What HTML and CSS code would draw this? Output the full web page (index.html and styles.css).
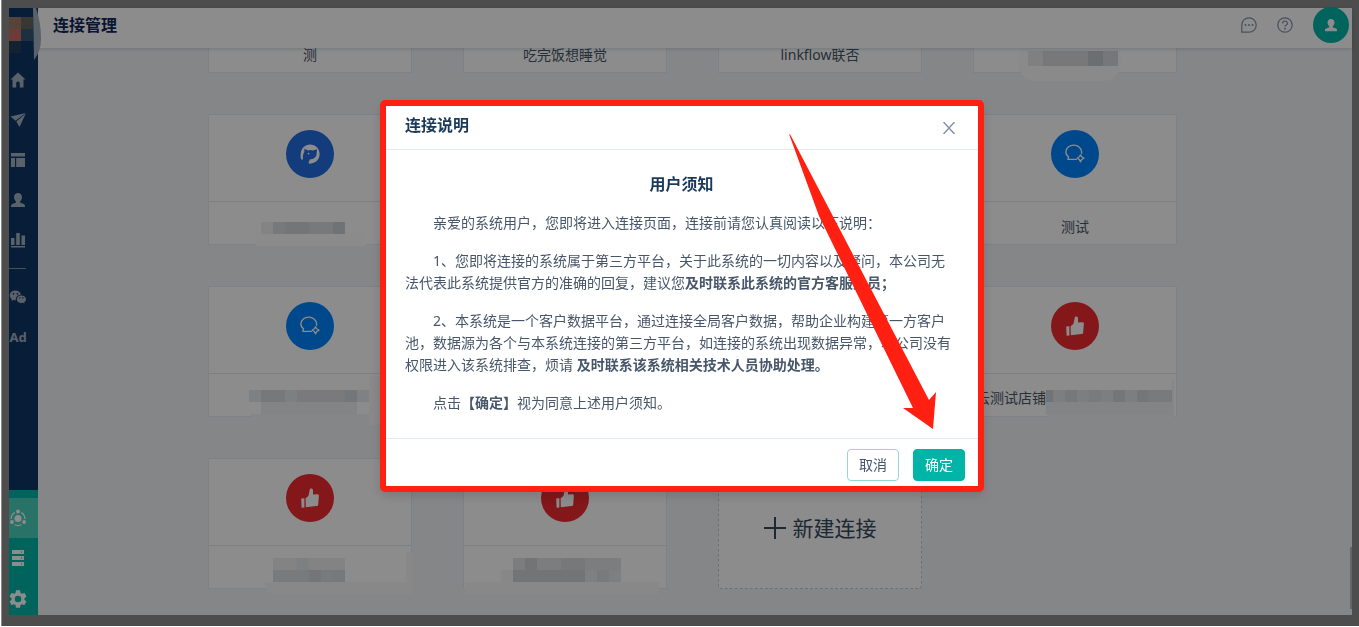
FILE: index.html
```
<!DOCTYPE html>
<html lang="zh-CN">
<head>
    <meta charset="UTF-8">
    <meta name="viewport" content="width=device-width, initial-scale=1.0">
    <title>连接管理</title>
    <link rel="stylesheet" href="styles.css">
</head>
<body>
    <!-- Shared icon shapes -->
    <svg class="sprite" aria-hidden="true">
        <symbol id="icon-chat" viewBox="0 0 20 20">
            <g fill="none" stroke="currentColor" stroke-width="1.3" stroke-linejoin="round" stroke-linecap="round">
                <path d="M11.500 15.300H2.800L3.600 13Q.8 11 .9 7.800C1 4 4.500 1.200 8.800 1.200S16.600 4.200 16.600 7.800V9.300"/>
                <path d="M15.500 10.800Q16.300 13.400 19 14.200Q16.300 15 15.500 17.800Q14.700 15 12.200 14.200Q14.700 13.400 15.500 10.800Z"/>
            </g>
        </symbol>
        <symbol id="icon-thumb" viewBox="0 0 20 20">
            <path fill="currentColor" d="M1.2 10.6L4.4 10.2V19.4L1.6 19.8ZM5.6 10.2L8.4 8L9.8 1.4C10 .2 13 0 13 2.6V6.6L17.6 6.2C18.8 6.2 19 7.2 18.8 8.4L18.2 16.4C18 17.8 17.4 18 16.4 18.1L5.8 19.3Z"/>
        </symbol>
        <symbol id="icon-user" viewBox="0 0 16 16">
            <path fill="currentColor" d="M8 1C10.5 1 12 2.8 12 5.2C12 7 11 8.8 10 9.4V10.6L13.6 12C14.6 12.4 15 13 15 15H1C1 13 1.4 12.4 2.4 12L6 10.6V9.4C5 8.8 4 7 4 5.2C4 2.8 5.500 1 8 1Z"/>
        </symbol>
    </svg>

    <div class="app">
        <nav class="sidebar">
            <div class="logo">
                <svg width="34" height="54" viewBox="0 0 34 54" aria-hidden="true">
                    <path fill="#a3b1bf" d="M24 0H27Q32 14 32 31Q32 43 25 52Z"/>
                    <rect y="9" width="12" height="12" fill="#9e7c68"/>
                    <rect x="12" y="9" width="12" height="12" fill="#696561"/>
                    <rect y="21" width="12" height="12" fill="#c96c68"/>
                    <rect x="12" y="21" width="12" height="12" fill="#345876"/>
                    <rect y="33" width="12" height="12" fill="#243e59"/>
                </svg>
            </div>
            <a class="nav-item" href="#" aria-label="首页">
                <svg width="16" height="16" viewBox="0 0 16 16"><path fill="currentColor" d="M8 .5L15.500 7.500H13.500V15.500H9.800V11Q9.800 9.500 8 9.500T6.200 11V15.500H2.500V7.500H.5Z"/></svg>
            </a>
            <a class="nav-item" href="#" aria-label="营销">
                <svg width="16" height="16" viewBox="0 0 16 16"><path fill="currentColor" d="M.5 4.500L15.700 1L5.500 8.800ZM15.800 1.500L9.500 15L6.300 9.500Z"/></svg>
            </a>
            <a class="nav-item" href="#" aria-label="内容">
                <svg width="16" height="16" viewBox="0 0 16 16"><path fill="currentColor" d="M1 1H15V4.500H1ZM1 6H5V15H1ZM6.200 6H15V15H6.200Z"/></svg>
            </a>
            <a class="nav-item" href="#" aria-label="用户">
                <svg width="16" height="16"><use href="#icon-user"/></svg>
            </a>
            <a class="nav-item" href="#" aria-label="报表">
                <svg width="16" height="16" viewBox="0 0 16 16"><path fill="currentColor" d="M1 6H4.500V13H1ZM6.200 1H9.800V13H6.200ZM11.500 3.500H15V13H11.500ZM1 14H15V15.500H1Z"/></svg>
            </a>
            <hr class="nav-line">
            <a class="nav-item" href="#" aria-label="微信">
                <svg width="18" height="16" viewBox="0 0 18 16">
                    <path fill="currentColor" fill-rule="evenodd" d="M6.500 1.500C3 1.500.8 3.700.8 6.200C.8 8 1.700 9.300 2.900 10.200L2.500 12L4.600 10.900L6.900 11.200C6.300 8 9 5.800 12 5.800C11.400 3.200 9.200 1.500 6.500 1.500ZM4.600 4A.8.8 0 1 1 4.500 4ZM8.500 4A.8.8 0 1 1 8.400 4Z"/>
                    <path fill="currentColor" fill-rule="evenodd" d="M12.300 6.500C9.800 6.500 7.800 8.100 7.800 10.200S9.800 14 12.300 14L14 13.700L15.600 14.500L15.200 13.100C16.400 12.400 17 11.400 17 10.200C17 8.100 14.900 6.500 12.300 6.500ZM10.900 8.300A.7.7 0 1 1 10.800 8.300ZM13.900 8.300A.7.7 0 1 1 13.800 8.300Z"/>
                </svg>
            </a>
            <a class="nav-item nav-text" href="#">Ad</a>

            <div class="nav-bottom">
                <a class="nav-item active" href="#" aria-label="连接管理">
                    <svg width="18" height="18" viewBox="0 0 18 18">
                        <g fill="currentColor"><circle cx="9" cy="9.500" r="3.500"/><circle cx="9" cy="2.500" r="1.900"/><circle cx="2.900" cy="13" r="1.900"/><circle cx="15.100" cy="13" r="1.900"/></g>
                        <path fill="none" stroke="currentColor" stroke-width="1.200" d="M2 10Q2.200 5.500 5.800 3.600M12.200 3.600Q15.800 5.500 16 10M5.500 15.800Q9 17.300 12.500 15.800"/>
                    </svg>
                </a>
                <a class="nav-item" href="#" aria-label="数据">
                    <svg width="16" height="16" viewBox="0 0 16 16"><path fill="currentColor" fill-rule="evenodd" d="M2 0H14V4H2ZM2 6H14V10H2ZM2 12H14V16H2ZM11 1.500V2.500H12V1.500ZM11 7.500V8.500H12V7.500ZM11 13.500V14.500H12V13.500Z"/></svg>
                </a>
                <a class="nav-item" href="#" aria-label="设置">
                    <svg width="18" height="18" viewBox="2 2 20 20"><path fill="currentColor" d="M19.140 12.940c.04-.3.060-.61.060-.94s-.02-.64-.07-.94l2.030-1.580a.49.49 0 0 0 .12-.61l-1.920-3.320a.49.49 0 0 0-.59-.22l-2.390.96a7 7 0 0 0-1.620-.94l-.36-2.540a.48.48 0 0 0-.48-.41h-3.840a.48.48 0 0 0-.47.41l-.36 2.540c-.59.24-1.130.57-1.620.94l-2.390-.96a.48.48 0 0 0-.59.22L2.740 8.870a.48.48 0 0 0 .12.61l2.030 1.580c-.05.3-.09.63-.09.94s.02.64.07.94l-2.030 1.580a.49.49 0 0 0-.12.61l1.920 3.320c.12.22.37.29.59.22l2.390-.96c.5.38 1.030.7 1.620.94l.36 2.540c.05.24.24.41.48.41h3.840c.24 0 .44-.17.47-.41l.36-2.540c.59-.24 1.130-.56 1.620-.94l2.390.96c.22.08.47 0 .59-.22l1.920-3.320a.48.48 0 0 0-.12-.61zM12 15.600a3.600 3.600 0 1 1 0-7.200 3.600 3.600 0 0 1 0 7.200z"/></svg>
                </a>
            </div>
        </nav>

        <div class="page">
            <header class="topbar">
                <h1>连接管理</h1>
                <button class="icon-btn" type="button" aria-label="消息">
                    <svg width="16" height="16" viewBox="0 0 16 16"><path fill="none" stroke="currentColor" stroke-width="1.200" d="M.8 15.200V8A7.200 7.200 0 1 1 8 15.200Z"/><g fill="currentColor"><circle cx="4.500" cy="8" r="1"/><circle cx="8" cy="8" r="1"/><circle cx="11.500" cy="8" r="1"/></g></svg>
                </button>
                <button class="icon-btn" type="button" aria-label="帮助">
                    <svg width="16" height="16" viewBox="0 0 16 16"><g fill="none" stroke="currentColor" stroke-width="1.200"><circle cx="8" cy="8" r="7.200"/><path d="M5.600 6.400A2.400 2.200 0 1 1 8.800 8.300Q8 8.700 8 9.800"/></g><circle cx="8" cy="11.700" r=".9" fill="currentColor"/></svg>
                </button>
                <button class="avatar" type="button" aria-label="账户">
                    <svg width="14" height="14"><use href="#icon-user"/></svg>
                </button>
            </header>

            <main class="content">
                <div class="card-grid">
                    <div class="card">
                        <div class="card-body"><span class="badge blue"><svg width="20" height="20"><use href="#icon-chat"/></svg></span></div>
                        <div class="card-name">测</div>
                    </div>
                    <div class="card">
                        <div class="card-body"><span class="badge blue"><svg width="20" height="20"><use href="#icon-chat"/></svg></span></div>
                        <div class="card-name">吃完饭想睡觉</div>
                    </div>
                    <div class="card">
                        <div class="card-body"><span class="badge blue"><svg width="20" height="20"><use href="#icon-chat"/></svg></span></div>
                        <div class="card-name">linkflow联否</div>
                    </div>
                    <div class="card">
                        <div class="card-body"><span class="badge blue"><svg width="20" height="20"><use href="#icon-chat"/></svg></span></div>
                        <div class="card-name masked">
                            <svg width="204" height="56" viewBox="0 0 204 56">
                                <rect x="45" y="11" width="103" height="40" rx="18" fill="#fbfbfb"/>
                                <rect x="55" y="21" width="15" height="15" fill="#e9eaec"/>
                                <rect x="70" y="21" width="45" height="15" fill="#dadbde"/>
                                <rect x="115" y="21" width="15" height="15" fill="#c5cad0"/>
                                <rect x="130" y="21" width="15" height="15" fill="#d6dbe1"/>
                            </svg>
                        </div>
                    </div>

                    <div class="card">
                        <div class="card-body">
                            <span class="badge navy">
                                <svg width="20" height="20" viewBox="0 0 20 20"><path fill="currentColor" d="M1.200 15.500C.5 13.500 .3 11.500 .8 9C1.400 4.500 5 .8 10 .6C15.500 .6 19.600 4.600 19.600 10C19.600 15.400 16 19.400 9 19.800L8.600 17.600C9.600 17.400 9.400 16.300 9.800 15.500C13.500 15.300 16.600 13 16.600 9.500L17 5.200L13 6.500Q10 5.600 8 6.600L4.500 4.800L4.300 8C2.800 10 2.800 13 3 15.500Z"/><circle cx="8.500" cy="9.600" r=".9" fill="currentColor"/></svg>
                            </span>
                        </div>
                        <div class="card-name masked">
                            <svg width="204" height="56" viewBox="0 0 204 56">
                                <rect x="48" y="30" width="110" height="14" fill="#fdfdfd"/>
                                <rect x="53" y="20" width="12" height="12" fill="#f0f0f2"/>
                                <rect x="65" y="20" width="12" height="12" fill="#d9dcde"/>
                                <rect x="77" y="20" width="24" height="12" fill="#d3d5d8"/>
                                <rect x="101" y="20" width="24" height="12" fill="#dadcdf"/>
                                <rect x="125" y="20" width="12" height="12" fill="#cdd0d5"/>
                            </svg>
                        </div>
                    </div>
                    <div class="card">
                        <div class="card-body"><span class="badge blue"><svg width="20" height="20"><use href="#icon-chat"/></svg></span></div>
                        <div class="card-name"></div>
                    </div>
                    <div class="card">
                        <div class="card-body"><span class="badge blue"><svg width="20" height="20"><use href="#icon-chat"/></svg></span></div>
                        <div class="card-name"></div>
                    </div>
                    <div class="card">
                        <div class="card-body"><span class="badge blue"><svg width="20" height="20"><use href="#icon-chat"/></svg></span></div>
                        <div class="card-name">测试</div>
                    </div>

                    <div class="card">
                        <div class="card-body"><span class="badge blue"><svg width="20" height="20"><use href="#icon-chat"/></svg></span></div>
                        <div class="card-name masked">
                            <svg width="204" height="56" viewBox="0 0 204 56">
                                <path fill="#f3f4f6" d="M42 40H204V51H60Q48 51 42 40Z"/>
                                <rect x="161" y="2" width="14" height="49" fill="#fafafa"/>
                                <rect x="53" y="28" width="96" height="13" fill="#eff0f2"/>
                                <rect x="41" y="16" width="12" height="12" fill="#e8e9eb"/>
                                <rect x="53" y="16" width="24" height="12" fill="#d9dbde"/>
                                <rect x="77" y="16" width="12" height="12" fill="#e6e7e9"/>
                                <rect x="89" y="16" width="48" height="12" fill="#dedfe2"/>
                                <rect x="137" y="16" width="12" height="12" fill="#d5d8dc"/>
                                <rect x="149" y="16" width="12" height="12" fill="#eaebed"/>
                            </svg>
                        </div>
                    </div>
                    <div class="card">
                        <div class="card-body"><span class="badge red"><svg width="20" height="20"><use href="#icon-thumb"/></svg></span></div>
                        <div class="card-name"></div>
                    </div>
                    <div class="card">
                        <div class="card-body"><span class="badge red"><svg width="20" height="20"><use href="#icon-thumb"/></svg></span></div>
                        <div class="card-name"></div>
                    </div>
                    <div class="card">
                        <div class="card-body"><span class="badge red"><svg width="20" height="20"><use href="#icon-thumb"/></svg></span></div>
                        <div class="card-name shop">
                            <span>云测试店铺</span>
                            <svg width="128" height="52" viewBox="0 0 128 52">
                                <path fill="#f3f4f6" d="M0 38H126V6H134V52H22Q4 48 0 38Z"/>
                                <rect y="28" width="126" height="13" fill="#eff0f2"/>
                                <rect y="16" width="126" height="12" fill="#e4e6e8"/>
                                <rect y="16" width="7" height="12" fill="#ced2d7"/>
                                <rect x="19" y="16" width="12" height="12" fill="#d8dadd"/>
                                <rect x="43" y="16" width="12" height="12" fill="#dcdee1"/>
                                <rect x="67" y="16" width="12" height="12" fill="#d4d7da"/>
                                <rect x="91" y="16" width="12" height="12" fill="#d6d8db"/>
                                <rect x="103" y="16" width="23" height="12" fill="#dcdee1"/>
                            </svg>
                        </div>
                    </div>

                    <div class="card">
                        <div class="card-body"><span class="badge red"><svg width="20" height="20"><use href="#icon-thumb"/></svg></span></div>
                        <div class="card-name masked">
                            <svg width="204" height="56" viewBox="0 0 204 56">
                                <path fill="#f8f8f9" d="M56 36H198V6H209V48H66Q58 46 56 36Z"/>
                                <rect x="65" y="12" width="72" height="12" fill="#eeeff1"/>
                                <rect x="89" y="12" width="12" height="12" fill="#e4e7e9"/>
                                <rect x="65" y="24" width="72" height="12" fill="#dcdee1"/>
                                <rect x="101" y="24" width="12" height="12" fill="#d4d6d9"/>
                                <rect x="125" y="24" width="12" height="12" fill="#d8dade"/>
                            </svg>
                        </div>
                    </div>
                    <div class="card">
                        <div class="card-body"><span class="badge red"><svg width="20" height="20"><use href="#icon-thumb"/></svg></span></div>
                        <div class="card-name masked">
                            <svg width="204" height="56" viewBox="0 0 204 56">
                                <rect x="2" y="36" width="194" height="12" fill="#f8f8f9"/>
                                <rect x="38" y="24" width="12" height="12" fill="#f6f6f7"/>
                                <rect x="50" y="12" width="108" height="12" fill="#e2e4e7"/>
                                <rect x="62" y="12" width="12" height="12" fill="#d0d3d7"/>
                                <rect x="98" y="12" width="24" height="12" fill="#d8dadd"/>
                                <rect x="50" y="24" width="72" height="12" fill="#d0d3d7"/>
                                <rect x="122" y="24" width="12" height="12" fill="#e8eaec"/>
                                <rect x="134" y="24" width="12" height="12" fill="#dcdee2"/>
                                <rect x="146" y="24" width="12" height="12" fill="#e6e8eb"/>
                            </svg>
                        </div>
                    </div>
                    <button class="card card-new" type="button">
                        <svg width="22" height="22" viewBox="0 0 22 22" aria-hidden="true"><path stroke="currentColor" stroke-width="2" d="M11 0V22M0 11H22"/></svg>
                        <span>新建连接</span>
                    </button>
                </div>
                <span class="scroll-thumb"></span>
            </main>
        </div>
    </div>

    <div class="overlay">
        <div class="modal" role="dialog" aria-modal="true" aria-labelledby="modalTitle">
            <div class="modal-header">
                <h2 id="modalTitle">连接说明</h2>
                <button class="modal-close" type="button" aria-label="关闭">
                    <svg width="12" height="12" viewBox="0 0 12 12"><path stroke="currentColor" stroke-width="1.500" d="M.5 0L11.500 12M11.500 0L.5 12"/></svg>
                </button>
            </div>
            <div class="modal-body">
                <h3>用户须知</h3>
                <p>亲爱的系统用户，您即将进入连接页面，连接前请您认真阅读以下说明：</p>
                <p>1、您即将连接的系统属于第三方平台，关于此系统的一切内容以及疑问，本公司无法代表此系统提供官方的准确的回复，建议您<strong>及时联系此系统的官方客服人员；</strong></p>
                <p>2、本系统是一个客户数据平台，通过连接全局客户数据，帮助企业构建第一方客户池，数据源为各个与本系统连接的第三方平台，如连接的系统出现数据异常，本公司没有权限进入该系统排查，烦请 <strong>及时联系该系统相关技术人员协助处理。</strong></p>
                <p>点击<strong>【确定】</strong>视为同意上述用户须知。</p>
            </div>
            <div class="modal-footer">
                <button class="btn" type="button">取消</button>
                <button class="btn btn-primary" type="button">确定</button>
            </div>
            <!-- Arrow pointing at the confirm button -->
            <svg class="arrow" width="34" height="296" viewBox="0 0 34 296" aria-hidden="true">
                <path fill="#ff2012" d="M-112 0Q-111 0 -110 2L28 266L35 258L32 295L2 274L12 274L-82 82Z"/>
            </svg>
        </div>
    </div>
</body>
</html>
```
FILE: styles.css
```
* {
    box-sizing: border-box;
}
body {
    margin: 0;
    height: 100vh;
    overflow: hidden;
    background-color: #fff;
    font-family: "Noto Sans", "Noto Sans CJK SC", sans-serif;
    font-size: 14px;
    line-height: 22px;
    color: #475669;
}
h1, h2, h3, p {
    margin: 0;
}
h1, h2, h3 {
    font-size: 16px;
    line-height: 24px;
    color: #1a3a5c;
}
button {
    font: inherit;
    color: inherit;
    padding: 0;
    border: none;
    background: none;
    cursor: pointer;
}
svg {
    display: block;
    flex: none;
}
.sprite {
    position: absolute;
    width: 0;
    height: 0;
}

/* App shell */
.app {
    display: flex;
    height: calc(100vh - 1px);
    margin-left: 2px;
    border: solid #8c8c8c;
    border-width: 8px 7px 11px 7px;
}
.page {
    flex: 1;
    min-width: 0;
    display: flex;
    flex-direction: column;
}

/* Sidebar */
.sidebar {
    width: 29px;
    display: flex;
    flex-direction: column;
    background-color: #103866;
    color: #a3b1bf;
}
.logo {
    position: relative;
    z-index: 2;
    height: 52px;
}
.nav-item {
    height: 40px;
    width: 18px;
    display: flex;
    align-items: center;
    justify-content: center;
    color: inherit;
    text-decoration: none;
}
.nav-text {
    font-weight: bold;
    font-size: 13px;
}
.nav-line {
    width: 17px;
    height: 1px;
    margin: 8px 0;
    border: none;
    background-color: #8093a8;
}
.nav-bottom {
    margin-top: auto;
    padding-top: 8px;
    background-color: #00b5a8;
    color: #fff;
}
.nav-bottom .nav-item {
    width: 100%;
    padding-right: 11px;
}
.nav-bottom .nav-item:last-child {
    height: 37px;
    padding-top: 4px;
}
.nav-bottom .active {
    background-color: #4ccfbd;
}

/* Top bar */
.topbar {
    position: relative;
    z-index: 1;
    height: 40px;
    padding: 0 3px 6px 15px;
    display: flex;
    align-items: center;
    gap: 20px;
    background-color: #fff;
    box-shadow: 0 1px 4px rgba(16, 56, 102, 0.2);
}
.topbar h1 {
    margin-right: auto;
    color: #10285c;
}
.icon-btn {
    color: #8492a6;
}
.avatar {
    width: 36px;
    height: 36px;
    display: flex;
    align-items: center;
    justify-content: center;
    border-radius: 50%;
    background-color: #00b5a8;
    color: #fff;
}

/* Connection cards */
.content {
    position: relative;
    flex: 1;
    min-height: 0;
    display: flex;
    flex-direction: column;
    justify-content: flex-end;
    align-items: center;
    padding: 0 5px 26px 0;
    overflow: hidden;
    background-color: #f3f5f8;
}
.card-grid {
    display: grid;
    grid-template-columns: repeat(4, 204px);
    gap: 41px 51px;
}
.card {
    height: 131px;
    background-color: #fff;
    border: 1px solid #e6ebf2;
}
.card-body {
    height: 87px;
    padding-top: 15px;
    display: flex;
    justify-content: center;
    border-bottom: 1px solid #e3e8ef;
}
.badge {
    width: 48px;
    height: 48px;
    display: flex;
    align-items: center;
    justify-content: center;
    border-radius: 50%;
    color: #fff;
}
.blue {
    background-color: #0084ff;
}
.navy {
    background-color: #216de0;
}
.red {
    background-color: #ef2a30;
}
.card-name {
    height: 43px;
    padding-top: 6px;
    display: flex;
    align-items: center;
    justify-content: center;
    white-space: nowrap;
}
.masked {
    padding-top: 0;
    align-items: flex-start;
}
.shop {
    padding-top: 0;
    align-items: flex-start;
}
.shop span {
    padding-top: 13px;
}
.card-new {
    display: flex;
    align-items: center;
    justify-content: center;
    gap: 7px;
    padding-top: 8px;
    border: 1px dashed #c4ccd8;
    border-radius: 4px;
    font-size: 21px;
    color: #34495e;
}
.scroll-thumb {
    position: absolute;
    right: 0;
    bottom: 6px;
    width: 2px;
    height: 62px;
    background-color: #bbb;
}

/* Modal */
.overlay {
    position: fixed;
    inset: 0 0 1px 1px;
    z-index: 10;
    display: flex;
    align-items: flex-start;
    justify-content: center;
    padding: 100px 0 0 4px;
    background-color: rgba(0, 0, 0, 0.45);
}
.modal {
    position: relative;
    width: 604px;
    border: 6px solid #ff2012;
    border-radius: 5px;
    background-color: #fff;
    box-shadow: 0 4px 12px rgba(0, 0, 0, 0.15);
}
.modal-header {
    height: 44px;
    padding: 0 23px 6px 19px;
    display: flex;
    align-items: center;
    justify-content: space-between;
    border-bottom: 1px solid #e5e9f2;
}
.modal-close {
    padding-top: 6px;
    color: #8492a6;
}
.modal-body {
    padding: 22px 20px 24px 19px;
}
.modal-body h3 {
    margin-bottom: 16px;
    text-align: center;
}
.modal-body p {
    text-indent: 2em;
}
.modal-body p + p {
    margin-top: 16px;
}
.modal-footer {
    padding: 10px 13px 5px;
    display: flex;
    justify-content: flex-end;
    gap: 14px;
    border-top: 1px solid #e5e9f2;
}
.btn {
    width: 52px;
    height: 32px;
    border: 1px solid #99d6d2;
    border-radius: 4px;
}
.btn-primary {
    border-color: #00b5a8;
    background-color: #00b5a8;
    color: #fff;
}
.arrow {
    position: absolute;
    right: 43px;
    bottom: 56px;
    overflow: visible;
    pointer-events: none;
}
```
